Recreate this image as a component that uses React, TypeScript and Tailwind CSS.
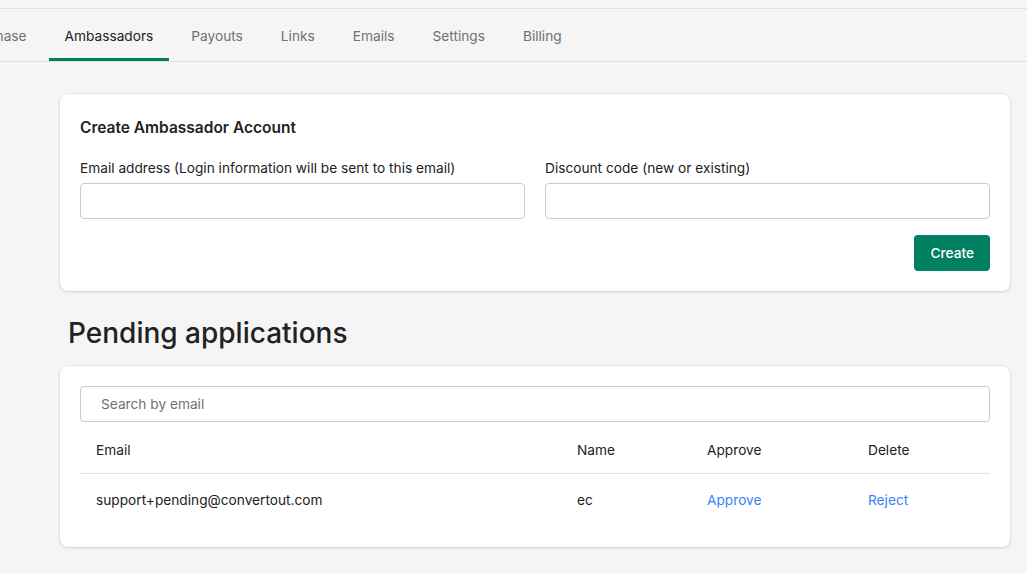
export default function App() {
  const tabs = ["Purchase", "Ambassadors", "Payouts", "Links", "Emails", "Settings", "Billing"];
  return (
    <div className="min-h-[573px] w-[1027px] overflow-hidden bg-[#f5f5f5] text-[#202223]" style={{ fontFamily: "Inter, 'Noto Sans', sans-serif" }}>
      <div className="h-[9px] border-b border-[#e1e1e1]" />
      <div className="flex h-[53px] items-stretch gap-[6px] border-b border-[#e1e1e1] ml-[-50px]">
        {tabs.map((t) => (
          <div key={t} className={`flex items-center px-4 text-[13.7px] border-b-[3px] ${t === "Ambassadors" ? "border-[#008060] text-[#202223]" : "border-transparent text-[#6d7175]"}`}>
            <span className="pt-[5px]">{t}</span>
          </div>
        ))}
      </div>
      <div className="ml-[60px] mr-[17px] pt-[32px]">
        <div className="rounded-lg bg-white p-5 shadow-[0_0_0_1px_rgba(63,63,68,0.05),0_1px_3px_rgba(63,63,68,0.15)]">
          <div className="text-[15.5px] font-semibold mt-[2px]">Create Ambassador Account</div>
          <div className="mt-[19px] grid grid-cols-2 gap-5">
            <div>
              <div className="text-[13.7px] mb-[4px]">Email address (Login information will be sent to this email)</div>
              <input className="h-9 w-full rounded border border-[#c9cccf] bg-white" />
            </div>
            <div>
              <div className="text-[13.7px] mb-[4px]">Discount code (new or existing)</div>
              <input className="h-9 w-full rounded border border-[#c9cccf] bg-white" />
            </div>
          </div>
          <div className="mt-4 flex justify-end">
            <button className="h-9 rounded bg-[#008060] px-4 text-[13.7px] font-medium text-white">Create</button>
          </div>
        </div>
        <h2 className="ml-2 mt-[26px] text-[28px] font-medium leading-[32px]">Pending applications</h2>
        <div className="mt-[17px] rounded-lg bg-white p-5 shadow-[0_0_0_1px_rgba(63,63,68,0.05),0_1px_3px_rgba(63,63,68,0.15)]">
          <input placeholder="Search by email" className="h-9 w-full rounded border border-[#c9cccf] px-5 text-[13.7px] placeholder:text-[#6d7175]" />
          <div className="mt-[6px] grid grid-cols-[481px_130px_161px_1fr] border-b border-[#e1e3e5] h-[46px] items-center pl-4 text-[13.7px]">
            <div>Email</div><div>Name</div><div>Approve</div><div>Delete</div>
          </div>
          <div className="grid grid-cols-[481px_130px_161px_1fr] h-[53px] items-center pl-4 text-[13.7px]">
            <div>support+pending@convertout.com</div><div>ec</div>
            <div className="text-[#3b82f6]">Approve</div><div className="text-[#3b82f6]">Reject</div>
          </div>
        </div>
      </div>
    </div>
  );
}
